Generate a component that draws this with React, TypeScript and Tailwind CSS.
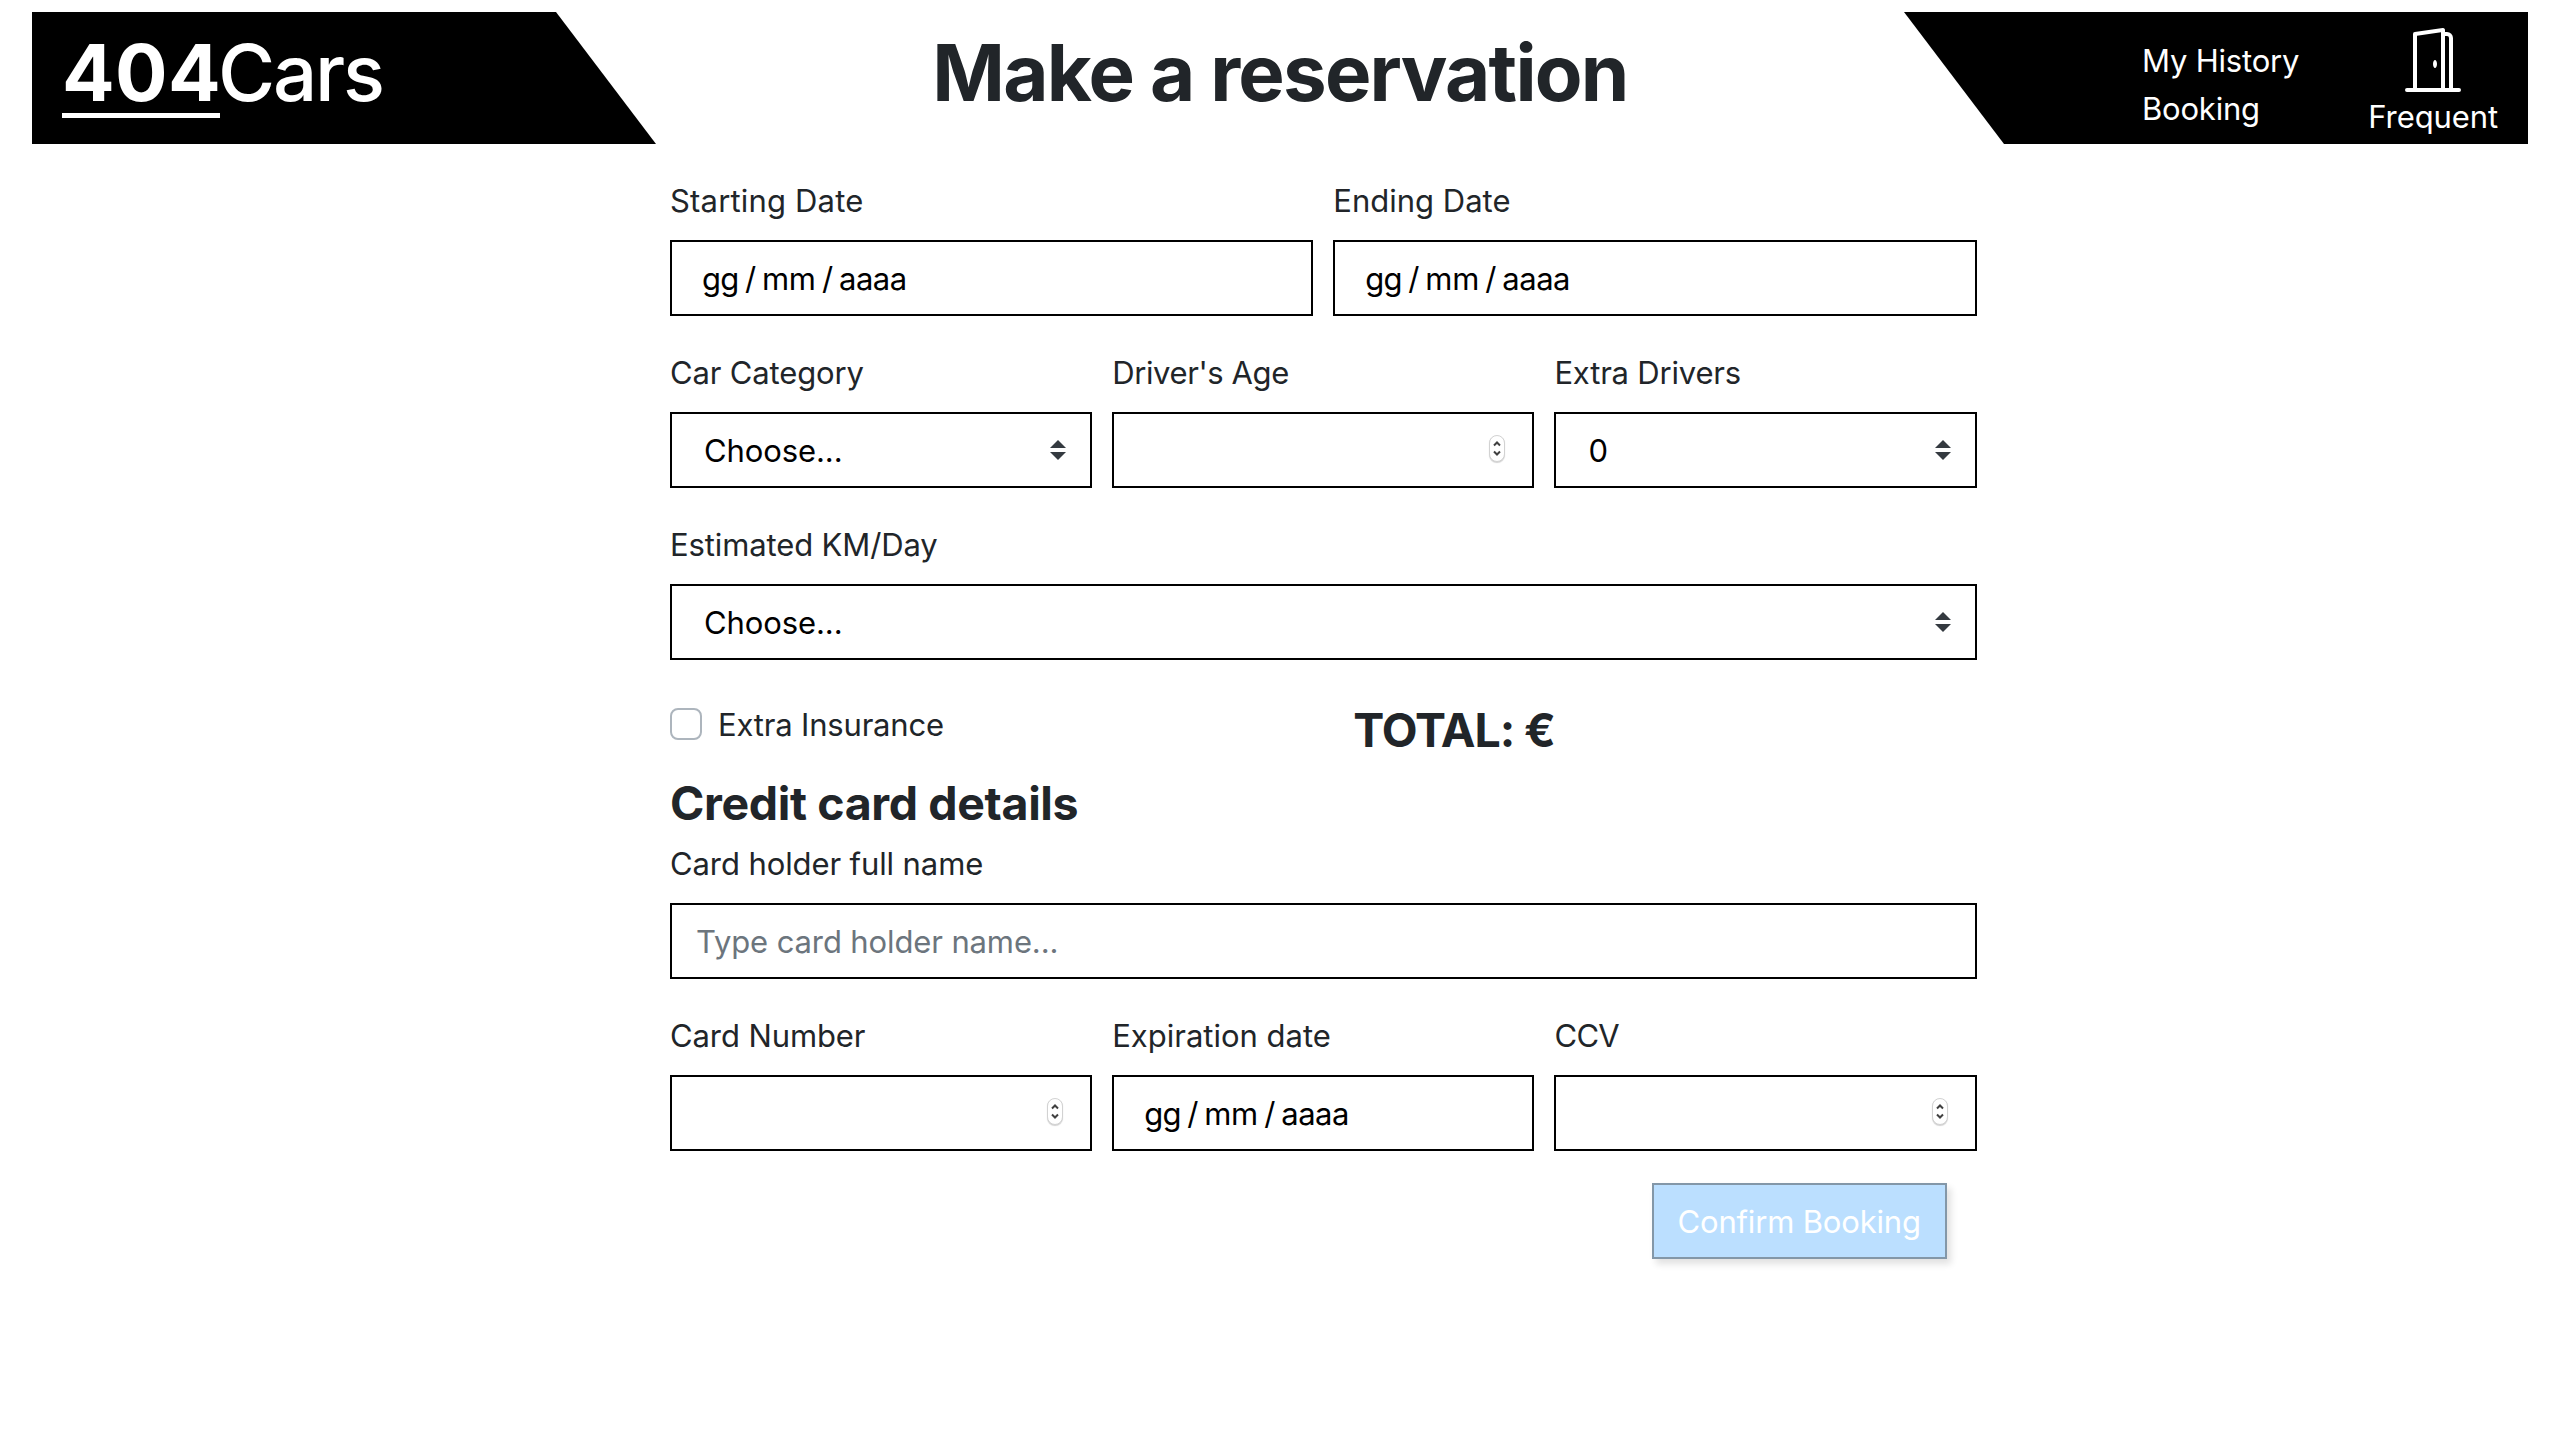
import React from "react";

function DoorIcon() {
  return (
    <svg viewBox="0 0 16 16" className="size-16 fill-white" aria-hidden="true">
      <path d="M1 15.5a.5.5 0 0 1 .5-.5h13a.5.5 0 0 1 0 1h-13a.5.5 0 0 1-.5-.5zM11.5 2H11V1h.5A1.5 1.5 0 0 1 13 2.5V15h-1V2.5a.5.5 0 0 0-.5-.5z" />
      <path d="M10.828.122A.5.5 0 0 1 11 .5V15h-1V1.077l-6 .857V15H3V1.5a.5.5 0 0 1 .43-.495l7-1a.5.5 0 0 1 .398.117z" />
      <path d="M8 9c0 .552.224 1 .5 1s.5-.448.5-1-.224-1-.5-1-.5.448-.5 1z" />
    </svg>
  );
}

function Field({ label, tracking, children }: { label: string; tracking: string; children: React.ReactNode }) {
  return (
    <div className="flex min-w-0 flex-1 flex-col">
      <label className={`mb-3.5 text-[31px] leading-[50px] whitespace-nowrap ${tracking}`}>{label}</label>
      {children}
    </div>
  );
}

const box = "flex h-[76px] w-full border-2 border-black bg-white text-[31px] leading-[50px] text-black";

function DateBox() {
  return (
    <div className={`${box} pt-3 pl-[30px]`}>
      <span className="w-[43px] tracking-[-0.8px]">gg</span>
      <span className="w-[17px]">/</span>
      <span className="w-[60px] tracking-[-0.3px]">mm</span>
      <span className="w-[17px]">/</span>
      <span className="tracking-[-0.5px]">aaaa</span>
    </div>
  );
}

function SelectBox({ value }: { value: string }) {
  return (
    <div className={`${box} items-start justify-between pt-3 pr-6 pl-8 tracking-[-0.1px]`}>
      <span>{value}</span>
      <svg viewBox="0 0 4 5" className="mt-3.5 h-5 w-4 fill-[#343a40]" aria-hidden="true">
        <path d="M2 0L0 2h4zm0 5L0 3h4z" />
      </svg>
    </div>
  );
}

function NumberBox() {
  return (
    <div className={`${box} items-start justify-end pt-[21px] pr-[27px]`}>
      <span className="flex h-[27px] w-4 items-center justify-center rounded-full border border-[#d2d2d2] bg-white shadow-[0_1px_1px_rgba(0,0,0,0.18)]">
        <svg viewBox="0 0 10 17" className="h-[17px] w-2.5 shrink-0 fill-none stroke-[#404040] stroke-2" aria-hidden="true">
          <path d="M2 5.5l3-3 3 3M2 11.5l3 3 3-3" />
        </svg>
      </span>
    </div>
  );
}

export default function App() {
  return (
    <div className="min-h-[1448px] w-full bg-white pt-3 font-['Inter',sans-serif] text-[#212529]">
      <header className="mx-8 flex h-[132px] justify-between">
        <div className="flex w-[624px] bg-black pt-5 pl-[30px] text-[78px] leading-[81px] text-white [clip-path:polygon(0_0,524px_0,100%_100%,0_100%)]">
          <span className="h-[86px] w-[158px] border-b-[5px] border-white font-bold tracking-[0.3px]">404</span>
          <span className="-ml-0.5 font-medium tracking-[-2.2px]">Cars</span>
        </div>
        <h1 className="pt-5 text-[78px] leading-[81px] font-bold tracking-[-1.76px] whitespace-nowrap">Make a reservation</h1>
        <div className="flex w-[624px] justify-between bg-black pr-[30px] pl-[238px] text-[31px] leading-[48px] text-white [clip-path:polygon(0_0,100%_0,100%_100%,100px_100%)]">
          <nav className="flex flex-col pt-[25px] tracking-[-0.2px]">
            <a>My History</a>
            <a>Booking</a>
          </nav>
          <div className="flex flex-col items-center pt-4">
            <DoorIcon />
            <span className="mt-px tracking-[-0.1px]">Frequent</span>
          </div>
        </div>
      </header>

      <form className="mt-8 ml-[670px] w-[1306.67px]">
        <div className="flex gap-5">
          <Field label="Starting Date" tracking="tracking-[0.18px]"><DateBox /></Field>
          <Field label="Ending Date" tracking="tracking-normal"><DateBox /></Field>
        </div>
        <div className="mt-8 flex gap-5">
          <Field label="Car Category" tracking="tracking-[-0.15px]"><SelectBox value="Choose..." /></Field>
          <Field label="Driver's Age" tracking="tracking-[-0.4px]"><NumberBox /></Field>
          <Field label="Extra Drivers" tracking="tracking-[-0.2px]"><SelectBox value="0" /></Field>
        </div>
        <div className="mt-8 flex">
          <Field label="Estimated KM/Day" tracking="tracking-[-0.12px]"><SelectBox value="Choose..." /></Field>
        </div>
        <div className="mt-8 grid h-[82px] grid-cols-2 gap-5">
          <label className="flex items-start pt-2 text-[31px] leading-[50px] tracking-[-0.18px]">
            <input type="checkbox" className="mt-2 mr-4 size-8 appearance-none rounded-lg border-2 border-[#adb5bd]" />
            Extra Insurance
          </label>
          <p className="pt-[9px] pl-5 text-[46.5px] leading-[58px] font-bold tracking-[-1.1px]">TOTAL: €</p>
        </div>
        <h2 className="h-[65px] text-[46.5px] leading-[58px] font-bold tracking-[-0.37px]">Credit card details</h2>
        <div className="flex">
          <Field label="Card holder full name" tracking="tracking-[-0.1px]">
            <input
              type="text"
              placeholder="Type card holder name..."
              className="h-[76px] w-full border-2 border-black bg-white pl-6 text-[31px] tracking-[-0.12px] placeholder:text-[#6c757d]"
            />
          </Field>
        </div>
        <div className="mt-8 flex gap-5">
          <Field label="Card Number" tracking="tracking-[-0.1px]"><NumberBox /></Field>
          <Field label="Expiration date" tracking="tracking-normal"><DateBox /></Field>
          <Field label="CCV" tracking="tracking-[-0.7px]"><NumberBox /></Field>
        </div>
        <div className="mt-8 flex justify-end pr-[30px]">
          <button
            type="button"
            disabled
            className="flex h-[76px] w-[295px] justify-center border-2 border-[#8397a8] bg-[#bbdfff] pt-3 text-[31px] leading-[50px] tracking-[-0.17px] text-white shadow-[4px_5px_7px_rgba(0,0,0,0.12)]"
          >
            Confirm Booking
          </button>
        </div>
      </form>
    </div>
  );
}
